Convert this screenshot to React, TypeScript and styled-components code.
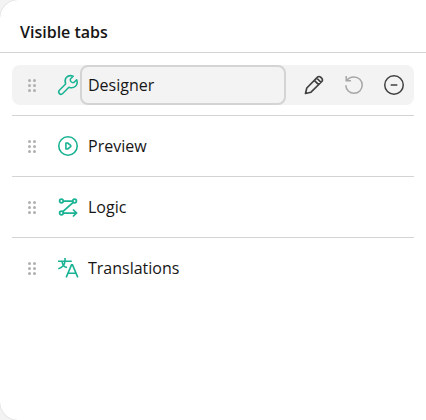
import React from 'react';
import styled, { createGlobalStyle } from 'styled-components';

const GlobalStyle = createGlobalStyle`
  * { box-sizing: border-box; }
  body { margin: 0; background: #f3f3f3; overflow: hidden; }
`;

const Panel = styled.main`
  width: 426px;
  height: 420px;
  background: #fff;
  border-radius: 18px 0 0 18px;
  box-shadow: 0 0 1px 0 #b0b0b0;
  font-family: "Open Sans", sans-serif;
  font-size: 16px;
  line-height: 24px;
  color: #161616;
`;

const Header = styled.header`
  height: 53px;
  padding: 20px 20px 8px;
  border-bottom: 1px solid #d4d4d4;
`;

const Title = styled.h1`
  margin: 0;
  font-size: 16px;
  line-height: 24px;
  font-weight: 600;
`;

const List = styled.ul`
  list-style: none;
  margin: 0;
  padding: 2px 12px 0;
`;

const Item = styled.li`
  height: 61px;
  padding: 10px 0;
  border-bottom: 1px solid #d4d4d4;
  &:last-child { border-bottom: 0; }
`;

const Row = styled.div<{ $active?: boolean }>`
  display: flex;
  align-items: center;
  height: 40px;
  padding-left: 8px;
  border-radius: 8px;
  background: ${(p) => (p.$active ? '#f3f3f3' : 'transparent')};
`;

const Icon = styled.svg.attrs({ width: 24, height: 24, viewBox: '0 0 24 24' })<{
  $color: string;
  $weight?: number;
}>`
  display: block;
  flex: none;
  fill: none;
  stroke: ${(p) => p.$color};
  stroke-width: ${(p) => p.$weight ?? 1.5};
`;

const Handle = styled(Icon)`
  margin-right: 12px;
  fill: #b0b0b0;
  stroke: none;
`;

const Label = styled.div<{ $active?: boolean }>`
  width: 206px;
  height: 40px;
  padding: 6px;
  border: 2px solid ${(p) => (p.$active ? '#d4d4d4' : 'transparent')};
  border-radius: 8px;
`;

const Actions = styled.div`
  display: flex;
  gap: 16px;
  margin-left: 16px;
`;

const green = '#19b394';

const Dots = () => (
  <Handle $color="none">
    {[7, 12, 17].map((y) => (
      <React.Fragment key={y}>
        <circle cx="9.5" cy={y + 0.5} r="1.5" />
        <circle cx="14.5" cy={y + 0.5} r="1.5" />
      </React.Fragment>
    ))}
  </Handle>
);

const Wrench = () => (
  <Icon $color={green} strokeLinejoin="round">
    <path d="M17.2 3.2C14.6 2.2 11.9 2.7 10.3 4.6C8.9 6.3 8.7 8.5 9.6 10.9L3.4 17.3C2.4 18.4 2.5 19.7 3.4 20.6C4.3 21.5 5.7 21.5 6.7 20.5L12.9 14.2C15.4 15.2 17.8 14.8 19.5 13.2C21.2 11.5 21.6 9.2 20.7 6.8L17.9 9.5C16.9 9.9 15.1 9 14.6 8.1C14.1 7.2 14.1 6.4 14.6 5.8Z" />
  </Icon>
);

const Play = () => (
  <Icon $color={green} $weight={1.6}>
    <circle cx="12" cy="12" r="9.2" />
    <path d="M9.9 9V15H11.6L14.7 12.7V11.3L11.6 9Z" strokeLinejoin="round" />
  </Icon>
);

const Flow = () => (
  <Icon $color={green} $weight={1.75}>
    <circle cx="5.4" cy="6" r="1.8" />
    <circle cx="18.6" cy="6" r="1.8" />
    <circle cx="5.4" cy="18" r="1.8" />
    <path d="M7.2 6H16.8M17.2 7.3L6.8 16.7M7.2 18H20.4M17 14.5L20.5 18L17 21.5" />
  </Icon>
);

const Language = () => (
  <Icon $color={green} $weight={1.6}>
    <path d="M2 5.2H15.8M9 2V5.2M9 5.2C8.7 8.4 6.4 11.5 2.3 12.8M6.1 5.2C6.3 8.5 8 10.8 11 11.6M10.2 21.4L15.5 8.9H16.5L21.8 21.4M12 17.2H20" />
  </Icon>
);

const Pencil = () => (
  <Icon $color="#404040" $weight={1.65} strokeLinejoin="round">
    <path d="M3.5 20.5L4.8 15L15.5 4.2C16.4 3.3 17.7 3.3 18.6 4.2L19.8 5.4C20.7 6.3 20.7 7.6 19.8 8.5L9 19.2ZM12.3 7.4L16.6 11.7M14.7 5L19 9.3" />
  </Icon>
);

const Undo = () => (
  <Icon $color="#a6a6a6">
    <path d="M4.2 3V7.8H9M4.5 7.6C6.1 5.3 8.8 3.9 12 3.9C16.6 3.9 20.2 7.5 20.2 12.1C20.2 16.7 16.6 20.3 12 20.3C7.6 20.3 4 16.9 3.8 12.2" />
  </Icon>
);

const Minus = () => (
  <Icon $color="#404040">
    <circle cx="12" cy="12" r="9.25" />
    <path d="M8.7 12H15.3" />
  </Icon>
);

const tabs = [
  { name: 'Designer', Glyph: Wrench, active: true },
  { name: 'Preview', Glyph: Play, active: false },
  { name: 'Logic', Glyph: Flow, active: false },
  { name: 'Translations', Glyph: Language, active: false },
];

export default function App() {
  return (
    <>
      <GlobalStyle />
      <Panel>
        <Header>
          <Title>Visible tabs</Title>
        </Header>
        <List>
          {tabs.map(({ name, Glyph, active }) => (
            <Item key={name}>
              <Row $active={active}>
                <Dots />
                <Glyph />
                <Label $active={active}>{name}</Label>
                {active && (
                  <Actions>
                    <Pencil />
                    <Undo />
                    <Minus />
                  </Actions>
                )}
              </Row>
            </Item>
          ))}
        </List>
      </Panel>
    </>
  );
}
